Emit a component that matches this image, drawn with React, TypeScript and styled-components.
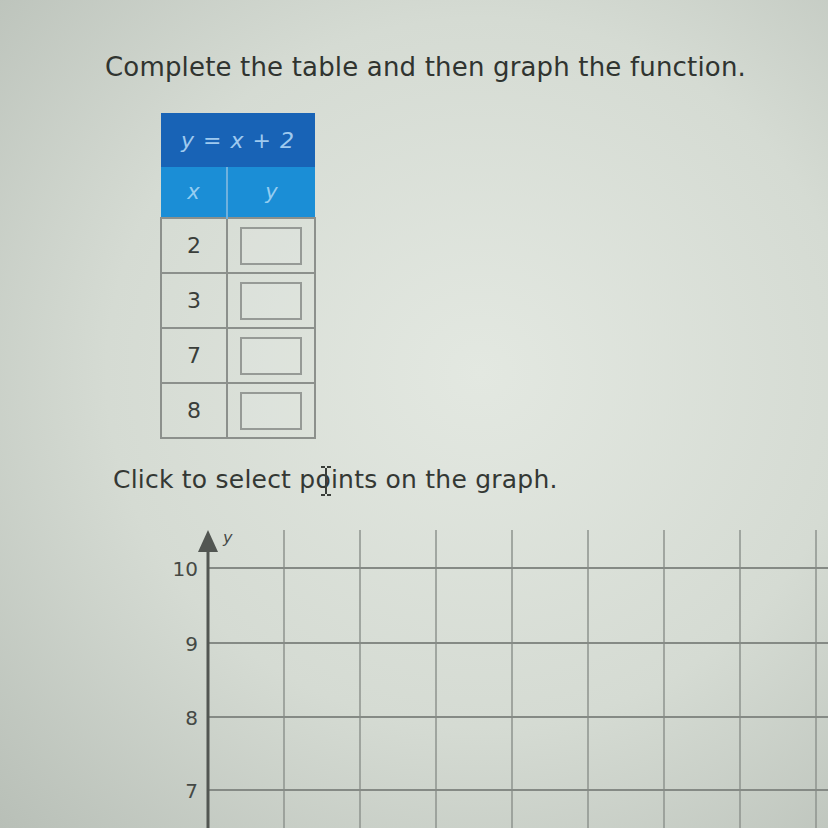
import React from "react";
import styled, { createGlobalStyle } from "styled-components";

const GlobalStyle = createGlobalStyle`
  html, body {
    margin: 0;
    padding: 0;
    width: 828px;
    height: 828px;
    overflow: hidden;
    background: radial-gradient(ellipse at 58% 45%, #e3e8e1 0%, #d5dbd3 55%, #b8bfb7 100%);
    font-family: "DejaVu Sans", Verdana, sans-serif;
    color: #333733;
  }
`;

const Page = styled.div`
  position: relative;
  padding: 49px 0 0 105px;
`;

const Title = styled.h1`
  margin: 0;
  font-size: 26px;
  font-weight: normal;
  line-height: 36px;
  letter-spacing: 0.17px;
  color: #303430;
`;

const Table = styled.table`
  margin: 28px 0 0 55px;
  border-collapse: collapse;
  width: 156px;
`;

const FormulaCell = styled.th`
  height: 54px;
  padding: 0;
  background: #1863b6;
  color: #9fcaef;
  font-size: 22px;
  font-weight: normal;
  font-style: italic;
  letter-spacing: 1px;
`;

const HeadCell = styled.th<{ $first?: boolean }>`
  height: 50px;
  padding: 0;
  background: #1b8ed6;
  color: #95cdf1;
  font-size: 21px;
  font-weight: normal;
  font-style: italic;
  border-left: ${(p) => (p.$first ? "none" : "2px solid #6fb1de")};
`;

const Cell = styled.td<{ $w: number }>`
  height: 53px;
  padding: 0;
  border: 2px solid #8c908c;
  text-align: center;
  font-size: 22px;
  color: #3a3e3a;
  width: ${(p) => p.$w}px;
`;

const AnswerBox = styled.div`
  width: 58px;
  height: 34px;
  margin: 0 auto;
  border: 2px solid #969a96;
  background: rgba(255, 255, 255, 0.08);
`;

const Prompt = styled.p`
  margin: 24px 0 0 8px;
  font-size: 25px;
  line-height: 34px;
  letter-spacing: 0.22px;
  color: #343834;
`;

const Cursor = styled.svg`
  position: absolute;
  left: 318px;
  top: 465px;
`;

const Graph = styled.svg`
  display: block;
  margin: 28px 0 0 55px;
`;

const rows = [2, 3, 7, 8];
const yLines = [
  { v: 10, y: 43 },
  { v: 9, y: 118 },
  { v: 8, y: 192 },
  { v: 7, y: 265 },
];
const xLines = [1, 2, 3, 4, 5, 6, 7, 8].map((i) => 48 + i * 76);

export default function App() {
  return (
    <Page>
      <GlobalStyle />
      <Title>Complete the table and then graph the function.</Title>
      <Table>
        <thead>
          <tr>
            <FormulaCell colSpan={2}>y = x + 2</FormulaCell>
          </tr>
          <tr>
            <HeadCell $first>x</HeadCell>
            <HeadCell>y</HeadCell>
          </tr>
        </thead>
        <tbody>
          {rows.map((x) => (
            <tr key={x}>
              <Cell $w={68}>{x}</Cell>
              <Cell $w={88}>
                <AnswerBox />
              </Cell>
            </tr>
          ))}
        </tbody>
      </Table>
      <Prompt>Click to select points on the graph.</Prompt>
      <Cursor width="16" height="32" viewBox="0 0 16 32">
        <path d="M3 2 H7 M9 2 H13 M8 3 V29 M3 30 H7 M9 30 H13" stroke="#3a3e3a" strokeWidth="2" fill="none" />
      </Cursor>
      <Graph width="668" height="320" viewBox="0 0 668 320">
        {xLines.map((x) => (
          <line key={x} x1={x} y1={5} x2={x} y2={320} stroke="#8e938e" strokeWidth="1.5" />
        ))}
        {yLines.map((l) => (
          <g key={l.v}>
            <line x1={48} y1={l.y} x2={668} y2={l.y} stroke="#858a85" strokeWidth="2" />
            <text
              x={38}
              y={l.y + 8}
              textAnchor="end"
              fontSize="20"
              fill="#454945"
              fontFamily="'DejaVu Sans', sans-serif"
            >
              {l.v}
            </text>
          </g>
        ))}
        <line x1={48} y1={20} x2={48} y2={320} stroke="#525652" strokeWidth="3" />
        <polygon points="48,5 38,27 58,27" fill="#525652" />
        <text x={63} y={18} fontSize="16" fontStyle="italic" fill="#454945" fontFamily="'DejaVu Sans', sans-serif">
          y
        </text>
      </Graph>
    </Page>
  );
}
